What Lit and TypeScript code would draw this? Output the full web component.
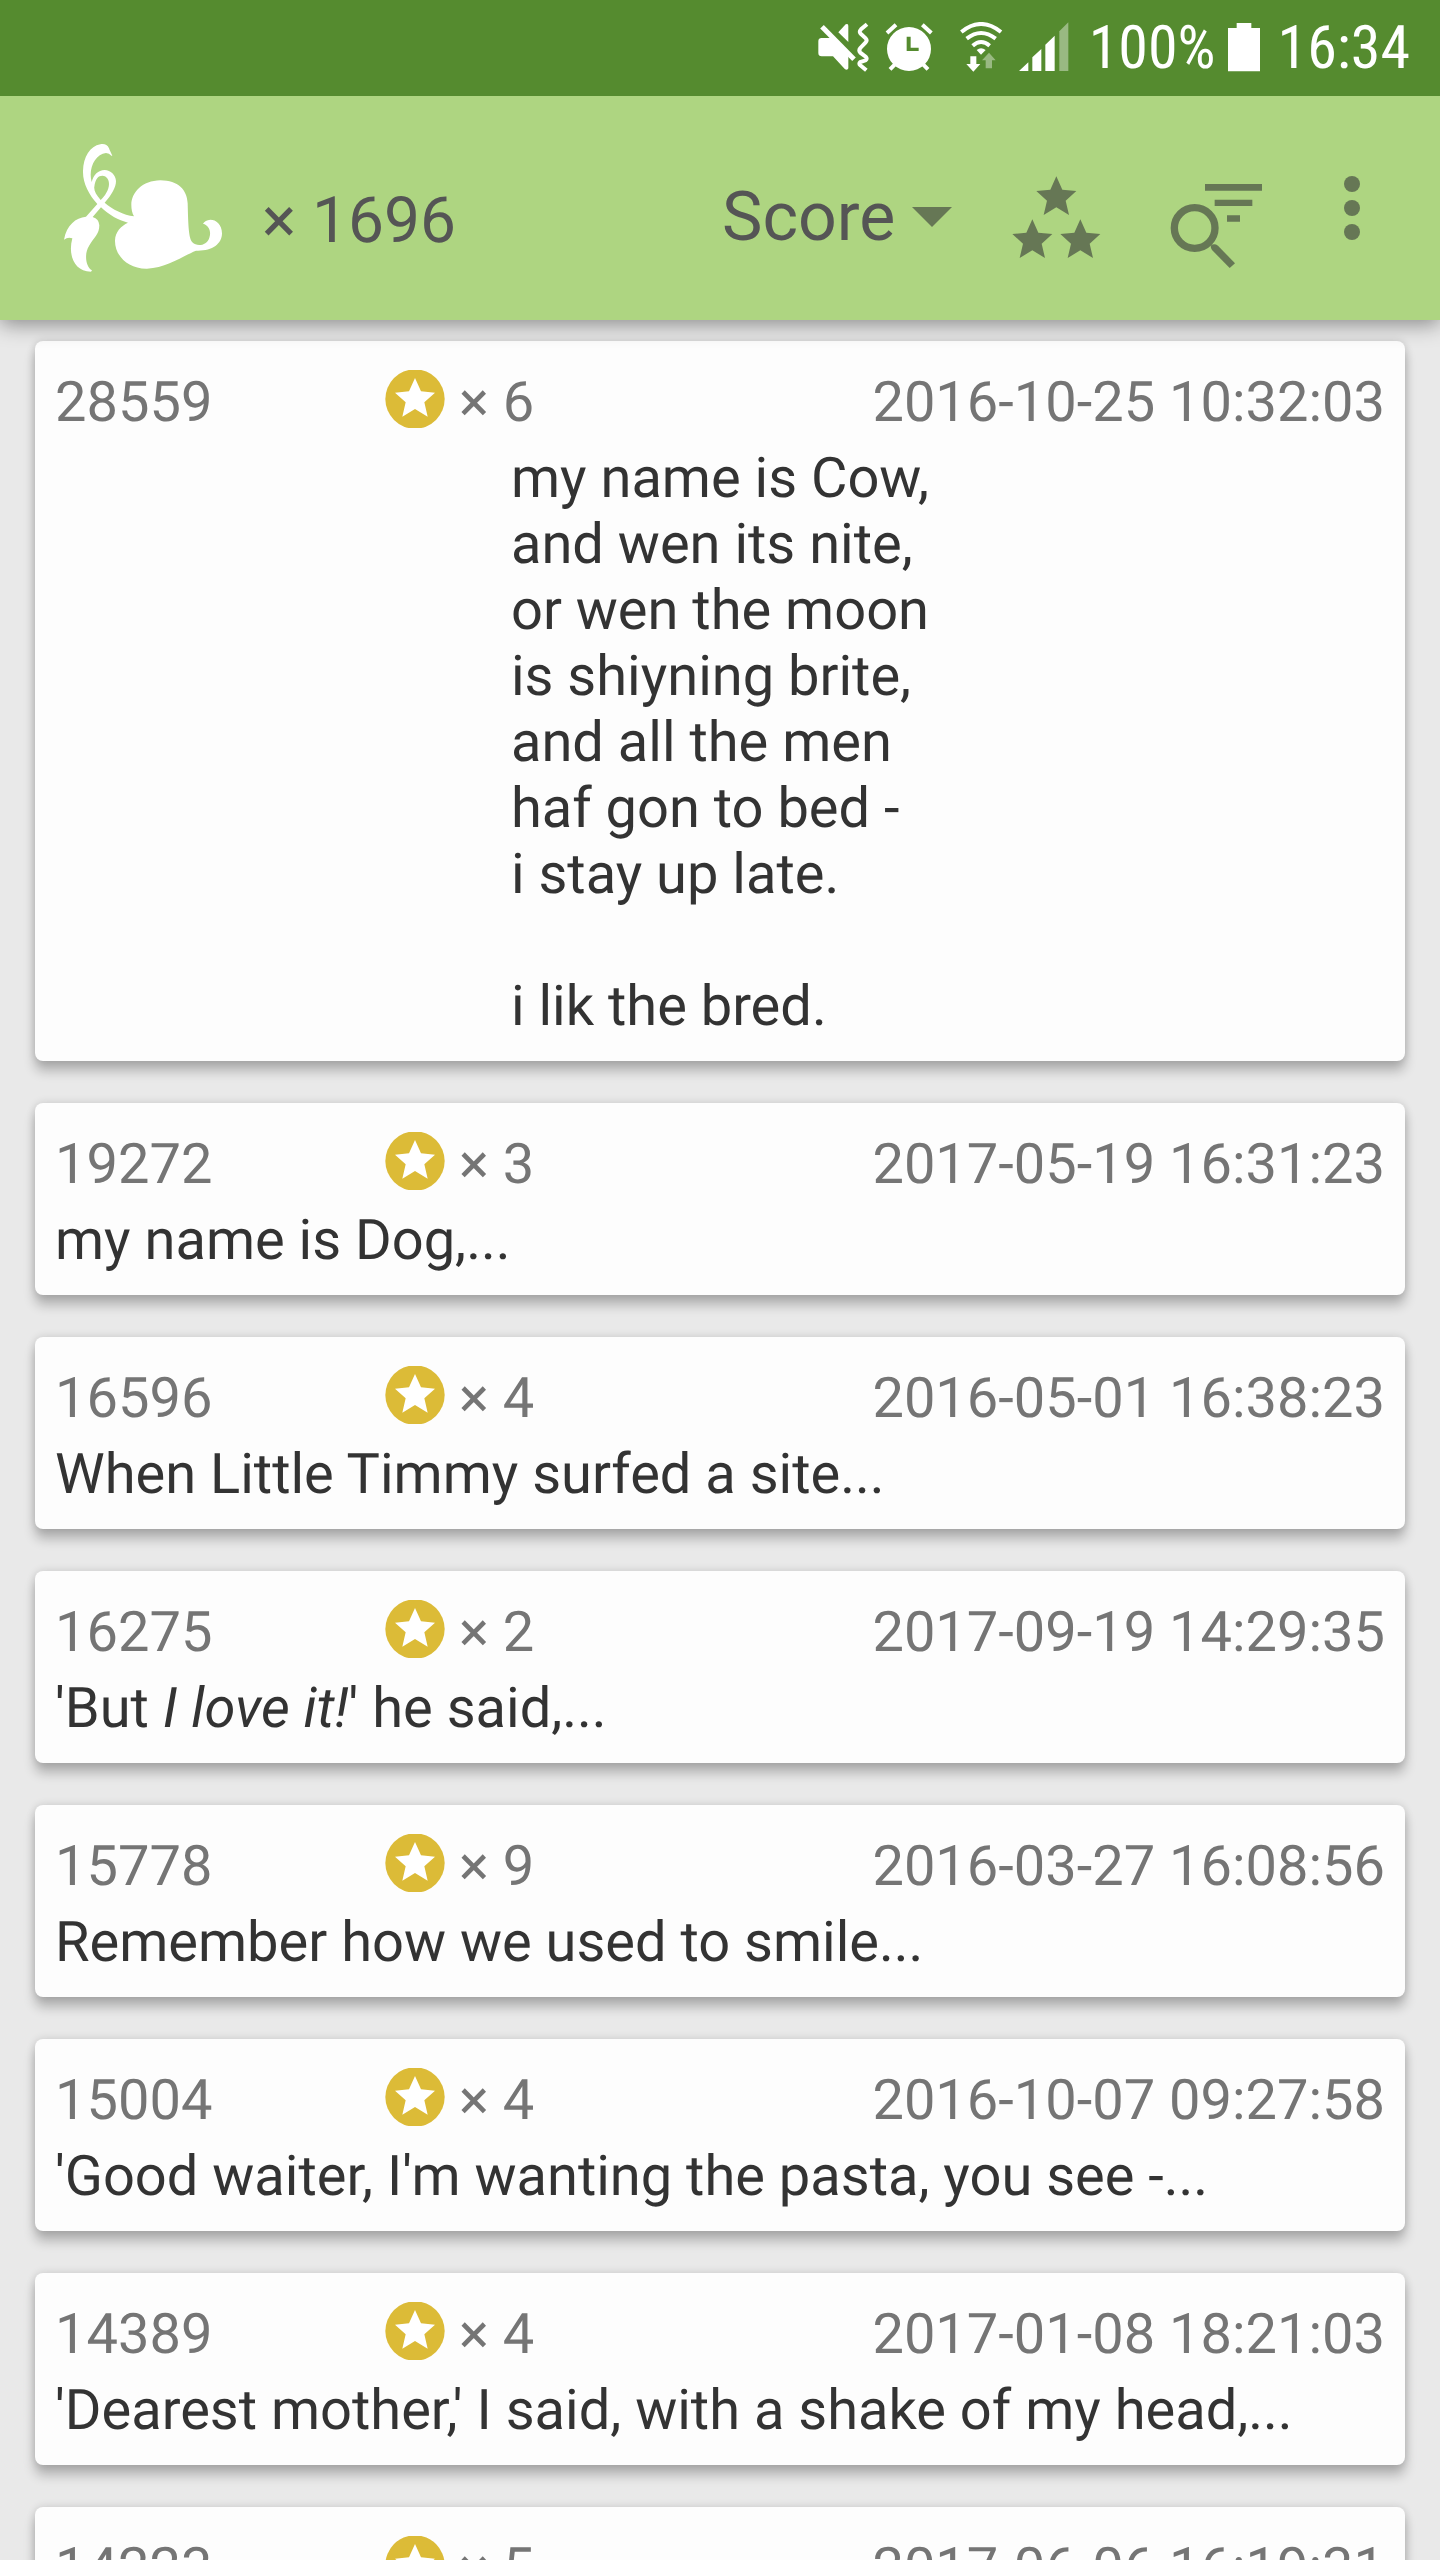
import { LitElement, html, css, svg } from "lit";
import type { TemplateResult } from "lit";
import { customElement, property } from "lit/decorators.js";

interface Poem {
  score: string;
  stars: string;
  date: string;
  text: TemplateResult | string;
  full?: boolean;
}

const POEMS: Poem[] = [
  {
    score: "28559",
    stars: "6",
    date: "2016-10-25 10:32:03",
    text: "my name is Cow,\nand wen its nite,\nor wen the moon\nis shiyning brite,\nand all the men\nhaf gon to bed -\ni stay up late.\n\ni lik the bred.",
    full: true,
  },
  { score: "19272", stars: "3", date: "2017-05-19 16:31:23", text: "my name is Dog,..." },
  { score: "16596", stars: "4", date: "2016-05-01 16:38:23", text: "When Little Timmy surfed a site..." },
  { score: "16275", stars: "2", date: "2017-09-19 14:29:35", text: html`'But <em>I love it!</em>' he said,...` },
  { score: "15778", stars: "9", date: "2016-03-27 16:08:56", text: "Remember how we used to smile..." },
  { score: "15004", stars: "4", date: "2016-10-07 09:27:58", text: "'Good waiter, I'm wanting the pasta, you see -..." },
  { score: "14389", stars: "4", date: "2017-01-08 18:21:03", text: "'Dearest mother,' I said, with a shake of my head,..." },
  { score: "14223", stars: "5", date: "2017-06-06 16:19:31", text: "" },
];

const STAR = "M0 -60L18 -20L60 -16L28 13L38 56L0 33L-38 56L-28 13L-60 -16L-18 -20Z";
const star = (x: number, y: number) => svg`<path d=${STAR} transform="translate(${x} ${y})" />`;

@customElement("status-bar")
export class StatusBar extends LitElement {
  static styles = css`
    :host {
      display: flex;
      align-items: center;
      justify-content: flex-end;
      height: 96px;
      padding-right: 30px;
      background: #558b2f;
      color: #fff;
      font-family: "Roboto Condensed", Roboto, sans-serif;
      font-size: 60px;
      line-height: 70px;
    }
    svg {
      display: block;
      fill: #fff;
      height: 52px;
    }
    .mute { width: 54px; margin-right: 14px; }
    .alarm { width: 48px; margin-right: 26px; }
    .wifi { width: 44px; margin-right: 16px; }
    .signal { width: 50px; margin-right: 20px; }
    .battery { width: 32px; margin: 0 18px 0 12px; }
    .dim { opacity: 0.4; }
  `;

  render() {
    return html`
      <svg class="mute" viewBox="54 66 162 156" aria-hidden="true">
        <path d="M68 114H104L148 160V205Q146 212 138 208L102 169H68Q58 169 58 159V124Q58 114 68 114Z" />
        <path d="M118 97L140 73Q148 69 148 78V126Z" />
        <path d="M69 80L165 178" fill="none" stroke="#fff" stroke-width="15" />
        <path d="M204 73L186 88Q178 96 187 103L200 115Q206 121 200 127L184 144Q178 151 184 158L200 170Q206 176 200 181L184 186Q178 192 184 196L202 211" fill="none" stroke="#fff" stroke-width="12" />
      </svg>
      <svg class="alarm" viewBox="256 66 144 156" aria-hidden="true">
        <path fill-rule="evenodd" d="M328 81A66 66 0 1 1 328 213A66 66 0 1 1 328 81ZM321 110V153H357V143H333V110Z" />
        <path d="M262 99L289 74M368 74L395 99M285 194L271 208M371 194L385 208" fill="none" stroke="#fff" stroke-width="12" />
      </svg>
      <svg class="wifi" viewBox="478 66 132 156" aria-hidden="true">
        <path d="M485 96Q544 48 604 96M501 116Q544 82 588 116M519 137Q544 115 570 137" fill="none" stroke="#fff" stroke-width="12" />
        <path d="M531 150Q544 139 558 150L544 164Z" />
        <path d="M512 169H530V192H542L521 215L500 192H512Z" />
        <path class="dim" d="M568 158L588 181H577V205H558V181H547Z" />
      </svg>
      <svg class="signal" viewBox="656 66 150 156" aria-hidden="true">
        <path d="M656 213L684 187V213ZM696 213V172L723 147V213ZM735 213V134L763 107V213Z" />
        <path class="dim" d="M777 213V94L804 67V213Z" />
      </svg>
      <span>100%</span>
      <svg class="battery" viewBox="444 66 96 156" aria-hidden="true">
        <path d="M470 69H514V84H540V214H444V84H470Z" />
      </svg>
      <span>16:34</span>
    `;
  }
}

@customElement("app-toolbar")
export class AppToolbar extends LitElement {
  static styles = css`
    :host {
      display: flex;
      align-items: center;
      height: 224px;
      padding: 0 64px;
      box-sizing: border-box;
      background: #aed581;
      color: #555;
      font-size: 68px;
      line-height: 80px;
      box-shadow: 0 4px 20px rgba(0, 0, 0, 0.42);
    }
    svg { display: block; fill: #667755; }
    .logo { width: 160px; height: 128px; fill: #fff; }
    .count {
      margin: 0 auto 0 38px;
      padding-top: 26px;
      font-size: 64px;
      font-weight: 400;
    }
    .sort {
      display: flex;
      align-items: center;
      gap: 16px;
      margin-right: 56px;
      padding-top: 18px;
    }
    .arrow { width: 40px; height: 20px; }
    select {
      appearance: none;
      border: 0;
      margin: 0;
      padding: 0;
      background: none;
      color: inherit;
      font: inherit;
    }
    .actions { display: flex; gap: 64px; }
    button {
      border: 0;
      padding: 0;
      background: none;
    }
    .icon { width: 96px; height: 120px; }
    .dots { width: 48px; height: 120px; }
  `;

  render() {
    return html`
      <svg class="logo" viewBox="72 72 480 384" aria-hidden="true">
        <path d="M217 107Q209 91 207 85C202 73 192 71 181 73C150 78 130 111 129 153C128 190 147 224 172 252L138 290C107 293 80 315 72 359Q84 350 97 355C84 402 100 454 153 455L156 451C137 440 132 402 147 378C163 350 178 343 178 316Q177 297 158 291L183 262C207 285 235 301 264 308C243 318 226 335 225 361C224 407 264 447 321 446C380 444 430 407 468 392C515 394 546 373 546 340C546 313 528 299 511 299Q495 300 489 311C508 316 514 336 508 353C501 376 472 382 457 367C446 353 445 321 443 250C441 209 415 182 361 181C307 182 274 217 274 255Q274 277 282 289C251 285 217 268 194 248C215 225 228 202 228 183C227 165 212 150 194 150C174 151 161 164 155 186C144 147 165 102 198 99Q208 99 214 107ZM182 240C168 225 161 210 163 200C166 176 175 167 187 167C201 168 207 179 207 192C207 210 194 229 182 240Z" fill-rule="evenodd" />
      </svg>
      <h1 class="count">× 1696</h1>
      <label class="sort">
        <select aria-label="Score">
          <option>Score</option>
        </select>
        <svg class="arrow" viewBox="0 0 40 20" aria-hidden="true"><path d="M0 0H40L20 20Z" /></svg>
      </label>
      <div class="actions">
        <button aria-label="Stars">
          <svg class="icon" viewBox="84 -6 288 360">${star(229, 139)}${star(157, 268)}${star(301, 268)}</svg>
        </button>
        <button aria-label="Search">
          <svg class="icon" viewBox="564 -6 288 360">
            <path d="M675 102H846V122H675ZM704 149H817V168H704ZM741 196H780V215H741Z" />
            <circle cx="644" cy="234" r="61" fill="none" stroke="#667755" stroke-width="22" />
            <path d="M692 287Q702 279 714 287L765 340L749 354L696 300Q692 294 692 287Z" />
          </svg>
        </button>
        <button aria-label="Menu">
          <svg class="dots" viewBox="1044 -6 144 360">
            <circle cx="1116" cy="102" r="24" />
            <circle cx="1116" cy="174" r="24" />
            <circle cx="1116" cy="246" r="24" />
          </svg>
        </button>
      </div>
    `;
  }
}

@customElement("poem-card")
export class PoemCard extends LitElement {
  @property({ attribute: false }) poem!: Poem;

  static styles = css`
    .card {
      padding: 28px 20px 22px;
      border-radius: 8px;
      background: #fdfdfd;
      box-shadow: 0 10px 12px rgba(0, 0, 0, 0.24), 0 0 8px rgba(0, 0, 0, 0.14);
    }
    .meta {
      display: flex;
      align-items: center;
      margin-bottom: 10px;
      color: #757575;
    }
    .score { flex: 0 0 330px; }
    .badge { width: 60px; height: 58px; margin: 0 14px 6px 0; }
    .date { margin-left: auto; }
    .text {
      min-height: 66px;
      margin: 0;
      color: #333;
      white-space: pre-line;
    }
    .full {
      width: fit-content;
      margin: 0 auto;
    }
  `;

  render() {
    const { score, stars, date, text, full } = this.poem;
    return html`
      <article class="card">
        <div class="meta">
          <span class="score">${score}</span>
          <svg class="badge" viewBox="0 0 180 174" aria-hidden="true">
            <circle cx="90" cy="87" r="89" fill="#dcbb37" />
            <g fill="#fff">${star(90, 84)}</g>
          </svg>
          <span>× ${stars}</span>
          <time class="date">${date}</time>
        </div>
        <p class="text ${full ? "full" : ""}">${text}</p>
      </article>
    `;
  }
}

@customElement("app-root")
export class AppRoot extends LitElement {
  static styles = css`
    :host {
      display: flex;
      flex-direction: column;
      height: 100vh;
      overflow: hidden;
      background: #e9e9e9;
      font-family: Roboto, sans-serif;
      font-size: 56px;
      line-height: 66px;
      text-rendering: geometricPrecision;
    }
    status-bar, app-toolbar { flex: none; }
    status-bar { z-index: 2; }
    app-toolbar { z-index: 1; }
    .list {
      display: flex;
      flex: 1;
      flex-direction: column;
      gap: 42px;
      min-height: 0;
      padding: 21px 35px 0;
      overflow: hidden;
    }
    poem-card { display: block; flex: none; }
  `;

  render() {
    return html`
      <status-bar></status-bar>
      <app-toolbar></app-toolbar>
      <main class="list">
        ${POEMS.map((poem) => html`<poem-card .poem=${poem}></poem-card>`)}
      </main>
    `;
  }
}
